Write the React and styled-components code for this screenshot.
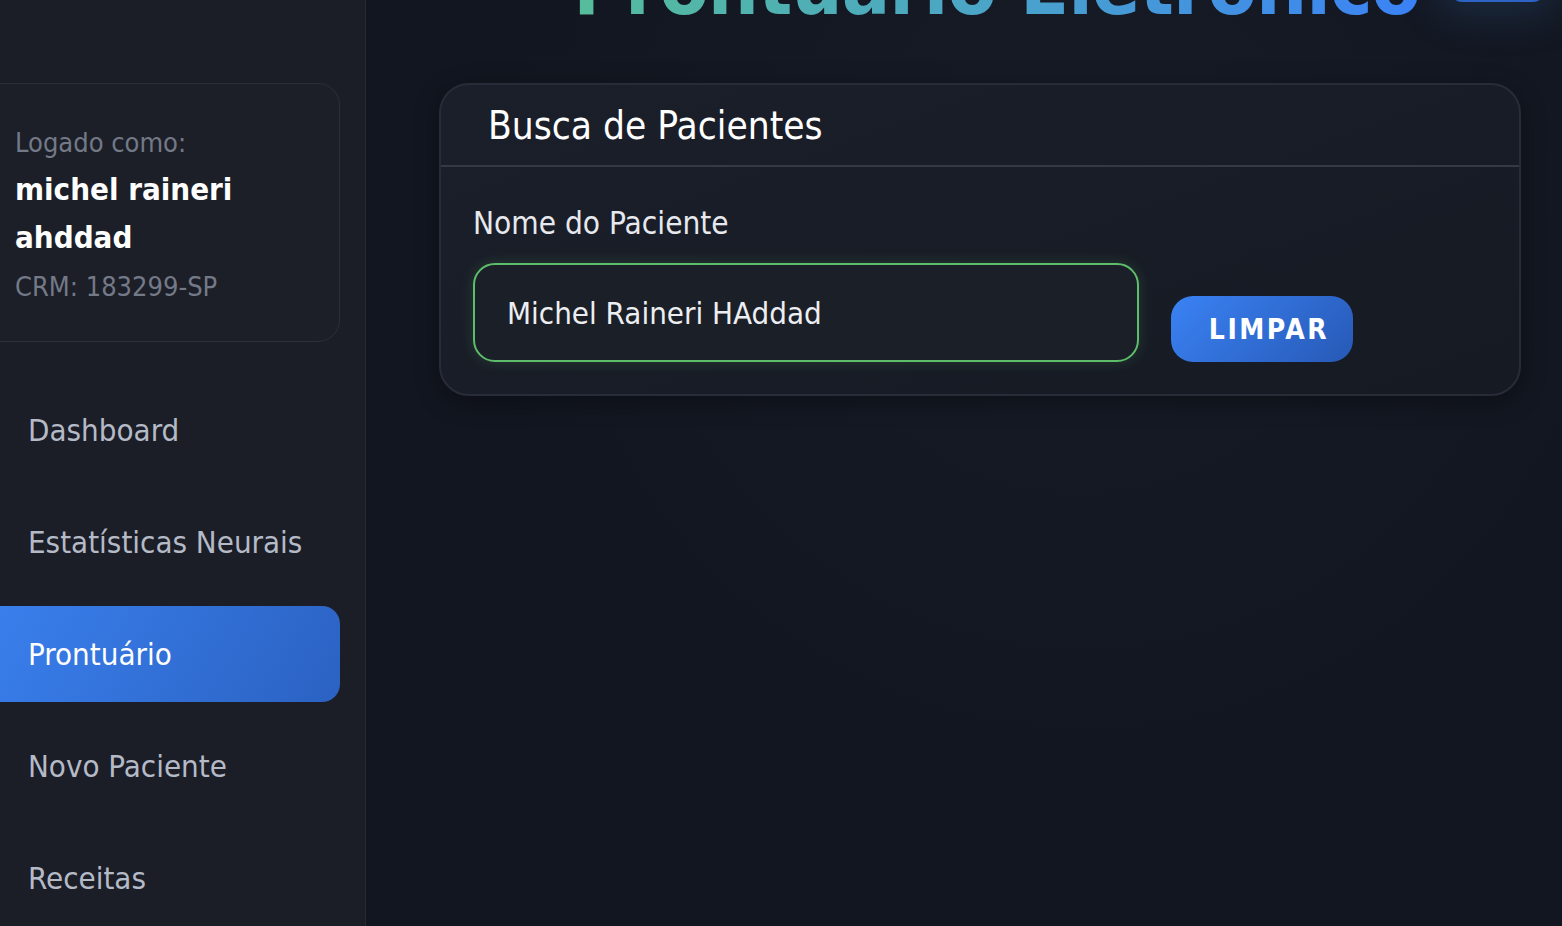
import React, { useState } from "react";
import styled, { createGlobalStyle } from "styled-components";

const GlobalStyle = createGlobalStyle`
  html, body {
    margin: 0;
    padding: 0;
    height: 100%;
    overflow: hidden;
    background: #121620;
  }
  body {
    font-family: "DejaVu Sans Condensed", "DejaVu Sans", sans-serif;
  }
  * {
    box-sizing: border-box;
  }
`;

const Layout = styled.div`
  display: flex;
  height: 926px;
  overflow: hidden;
`;

const Sidebar = styled.aside`
  width: 366px;
  flex-shrink: 0;
  background: #1b1e27;
  border-right: 1px solid #262a35;
  padding-top: 83px;
  padding-right: 25px;
  display: flex;
  flex-direction: column;
`;

const UserCard = styled.div`
  margin-left: -30px;
  height: 259px;
  border: 1px solid #2b2f3b;
  border-radius: 22px;
  background: #1c1f28;
  padding: 40px 0 0 44px;
  display: flex;
  flex-direction: column;
`;

const UserLabel = styled.div`
  font-size: 27px;
  line-height: 38px;
  color: #737987;
  margin-top: ${(p) => p.$gap || 0}px;
`;

const UserName = styled.div`
  font-size: 31px;
  line-height: 48px;
  font-weight: bold;
  color: #ffffff;
  width: 260px;
  margin-top: 3px;
`;

const Nav = styled.nav`
  margin-top: 40px;
  display: flex;
  flex-direction: column;
  gap: 16px;
`;

const NavItem = styled.a`
  display: flex;
  align-items: center;
  height: 96px;
  margin-left: -20px;
  padding-left: 48px;
  border-radius: 0 18px 18px 0;
  font-size: 31px;
  text-decoration: none;
  color: ${(p) => (p.$active ? "#ffffff" : "#b5bac7")};
  background: ${(p) =>
    p.$active ? "linear-gradient(120deg, #3a80ee 0%, #2b62c2 100%)" : "transparent"};
  cursor: pointer;
`;

const Main = styled.main`
  flex: 1;
  padding: 0 41px 0 73px;
  background: radial-gradient(ellipse at 60% 20%, #161b26 0%, #121620 60%);
`;

const Header = styled.header`
  margin-top: -46px;
  height: 67px;
  display: flex;
  justify-content: flex-end;
  align-items: flex-end;
  gap: 30px;
  margin-right: -24px;
`;

const Title = styled.h1`
  margin: 0 0 1px 0;
  font-size: 80px;
  line-height: 66px;
  font-weight: bold;
  letter-spacing: -1px;
  background: linear-gradient(90deg, #56bd9b 0%, #4aa4c9 50%, #3b82f6 100%);
  -webkit-background-clip: text;
  background-clip: text;
  color: transparent;
`;

const TopButton = styled.button`
  width: 95px;
  height: 48px;
  margin-bottom: 19px;
  border: 0;
  border-radius: 12px;
  background: #2d63c4;
  box-shadow: 0 0 40px 14px rgba(56, 110, 170, 0.22);
`;

const Card = styled.section`
  margin-top: 62px;
  border: 2px solid #282c38;
  border-radius: 30px;
  background: linear-gradient(160deg, #1b1f2a 0%, #161a23 100%);
  box-shadow: 0 6px 24px rgba(0, 0, 0, 0.35);
  overflow: hidden;
`;

const CardHeader = styled.div`
  height: 82px;
  padding-left: 47px;
  display: flex;
  align-items: center;
  border-bottom: 2px solid #353946;
  font-size: 38.5px;
  color: #ffffff;
`;

const CardBody = styled.div`
  padding: 36px 32px 32px 32px;
`;

const FieldLabel = styled.label`
  display: block;
  font-size: 31.3px;
  color: #e7e9ee;
  line-height: 40px;
`;

const Row = styled.div`
  margin-top: 20px;
  display: flex;
  align-items: flex-end;
  gap: 32px;
`;

const Input = styled.input`
  width: 666px;
  height: 99px;
  padding: 0 32px;
  border: 2px solid #5dbd6a;
  border-radius: 22px;
  background: #1b1f27;
  color: #eceef2;
  font-family: inherit;
  font-size: 31px;
  outline: none;
  box-shadow: 0 0 14px rgba(93, 189, 106, 0.2);
`;

const ClearButton = styled.button`
  width: 182px;
  height: 66px;
  padding: 0 0 0 14px;
  border: 0;
  border-radius: 22px;
  background: linear-gradient(135deg, #3a82f4 0%, #2759b6 100%);
  color: #ffffff;
  font-family: inherit;
  font-size: 28px;
  font-weight: bold;
  letter-spacing: 2.5px;
  cursor: pointer;
`;

const navItems = ["Dashboard", "Estatísticas Neurais", "Prontuário", "Novo Paciente", "Receitas"];

export default function App() {
  const [nome, setNome] = useState("Michel Raineri HAddad");

  return (
    <>
      <GlobalStyle />
      <Layout>
        <Sidebar>
          <UserCard>
            <UserLabel>Logado como:</UserLabel>
            <UserName>michel raineri ahddad</UserName>
            <UserLabel $gap={7}>CRM: 183299-SP</UserLabel>
          </UserCard>
          <Nav>
            {navItems.map((item) => (
              <NavItem key={item} $active={item === "Prontuário"}>
                {item}
              </NavItem>
            ))}
          </Nav>
        </Sidebar>
        <Main>
          <Header>
            <Title>Prontuário Eletrônico</Title>
            <TopButton aria-label="menu" />
          </Header>
          <Card>
            <CardHeader>Busca de Pacientes</CardHeader>
            <CardBody>
              <FieldLabel>Nome do Paciente</FieldLabel>
              <Row>
                <Input value={nome} onChange={(e) => setNome(e.target.value)} />
                <ClearButton onClick={() => setNome("")}>LIMPAR</ClearButton>
              </Row>
            </CardBody>
          </Card>
        </Main>
      </Layout>
    </>
  );
}
